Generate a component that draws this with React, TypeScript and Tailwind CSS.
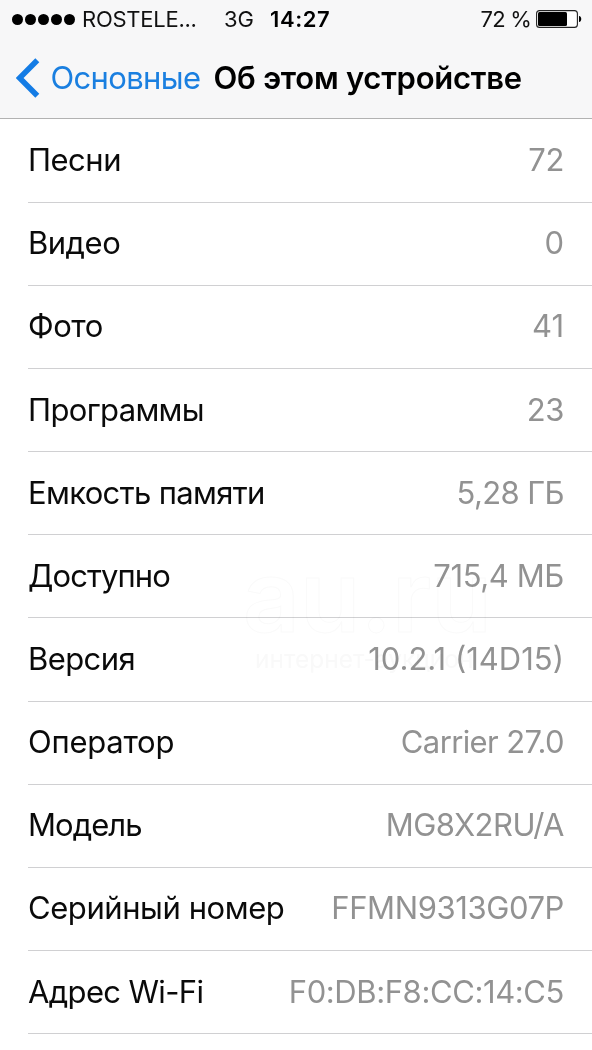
interface InfoRow {
  label: string;
  value: string;
  labelClass?: string;
  valueClass?: string;
}

const rows: InfoRow[] = [
  { label: 'Песни', value: '72', labelClass: 'tracking-[-0.5px]', valueClass: 'tracking-[-0.4px]' },
  { label: 'Видео', value: '0', labelClass: 'tracking-[-0.5px]' },
  { label: 'Фото', value: '41', labelClass: 'tracking-[-0.5px]' },
  { label: 'Программы', value: '23', labelClass: 'tracking-[-0.65px]', valueClass: 'tracking-[-0.4px]' },
  { label: 'Емкость памяти', value: '5,28 ГБ', labelClass: 'tracking-[-0.65px]', valueClass: 'tracking-[-0.6px]' },
  { label: 'Доступно', value: '715,4 МБ', labelClass: 'tracking-[-0.9px]', valueClass: 'tracking-[-0.4px]' },
  { label: 'Версия', value: '10.2.1 (14D15)', labelClass: 'tracking-[-0.6px]' },
  { label: 'Оператор', value: 'Carrier 27.0', labelClass: 'tracking-[-0.25px]', valueClass: 'tracking-[-0.62px]' },
  { label: 'Модель', value: 'MG8X2RU/A', labelClass: 'tracking-[-0.95px]', valueClass: 'tracking-[-0.5px]' },
  { label: 'Серийный номер', value: 'FFMN9313G07P', labelClass: 'tracking-[-0.43px]', valueClass: 'tracking-[-0.4px]' },
  { label: 'Адрес Wi-Fi', value: 'F0:DB:F8:CC:14:C5', labelClass: 'tracking-[-0.65px]', valueClass: 'tracking-[-0.4px]' }
];

const StatusBar = () => (
  <div className="flex h-[38px] items-center pl-3 pr-[10px] text-[22px] leading-none text-[#111]">
    <div className="flex gap-[2px]">
      {[0, 1, 2, 3, 4].map(i => (
        <span key={i} className="size-[11px] rounded-full bg-black" />
      ))}
    </div>
    <span className="ml-[7px] w-[142px] whitespace-nowrap tracking-[-0.25px]">ROSTELE...</span>
    <span className="w-[46px] whitespace-nowrap">3G</span>
    <span className="font-semibold tracking-[0.6px] text-black">14:27</span>
    <span className="ml-auto whitespace-nowrap tracking-[-0.8px]">72 %</span>
    <svg className="ml-[5px] shrink-0" width="46" height="18" viewBox="0 0 46 18">
      <rect x="0.6" y="0.6" width="40.8" height="16.8" rx="3" fill="#fff" stroke="#222" strokeWidth="1.1" />
      <rect x="2" y="2" width="29" height="14" rx="1.5" fill="#000" />
      <path d="M43 6 C46 6.4 46 11.6 43 12 Z" fill="#000" />
    </svg>
  </div>
);

const NavBar = () => (
  <div className="flex h-[79px] items-center pl-4 text-[31px] leading-none">
    <svg width="24" height="40" viewBox="0 0 24 40" fill="none">
      <path d="M21.3 2.3 L3.6 20 L21.3 37.7" stroke="#147ce5" strokeWidth="5.6" />
    </svg>
    <span className="ml-[10.5px] w-[151px] whitespace-nowrap tracking-[-0.65px] text-[#1a7fe0]">Основные</span>
    <h1 className="ml-3 whitespace-nowrap font-semibold tracking-[-0.25px] text-black">Об этом устройстве</h1>
  </div>
);

const App = () => {
  return (
    <div className="relative h-[1050px] w-[592px] overflow-hidden bg-white font-['Inter','Liberation_Sans',sans-serif]">
      <header className="h-[119px] border-b border-[#b2b2b2] bg-[#f7f7f8]">
        <StatusBar />
        <NavBar />
      </header>

      <ul className="pl-7 pt-[0.6px]">
        {rows.map(row => (
          <li
            key={row.label}
            className="flex h-[83.15px] items-center justify-between border-b border-[#d0d0d2] pb-[2px] pr-7 text-[31px] leading-none whitespace-nowrap"
          >
            <span className={`text-[#0a0a0a] ${row.labelClass ?? ''}`}>{row.label}</span>
            <span className={`text-[#929292] ${row.valueClass ?? ''}`}>{row.value}</span>
          </li>
        ))}
      </ul>

      {/* Faint watermark over the list */}
      <div className="pointer-events-none absolute left-[243px] top-[548px] whitespace-nowrap mix-blend-multiply">
        <div className="text-[99px] font-semibold leading-[96px] text-transparent [-webkit-text-stroke:1px_#fafafa]">au.ru</div>
        <div className="pl-3 text-[24.5px] leading-[31px] text-[#f9f9f9]">интернет-аукцион</div>
      </div>
    </div>
  );
};

export default App;
